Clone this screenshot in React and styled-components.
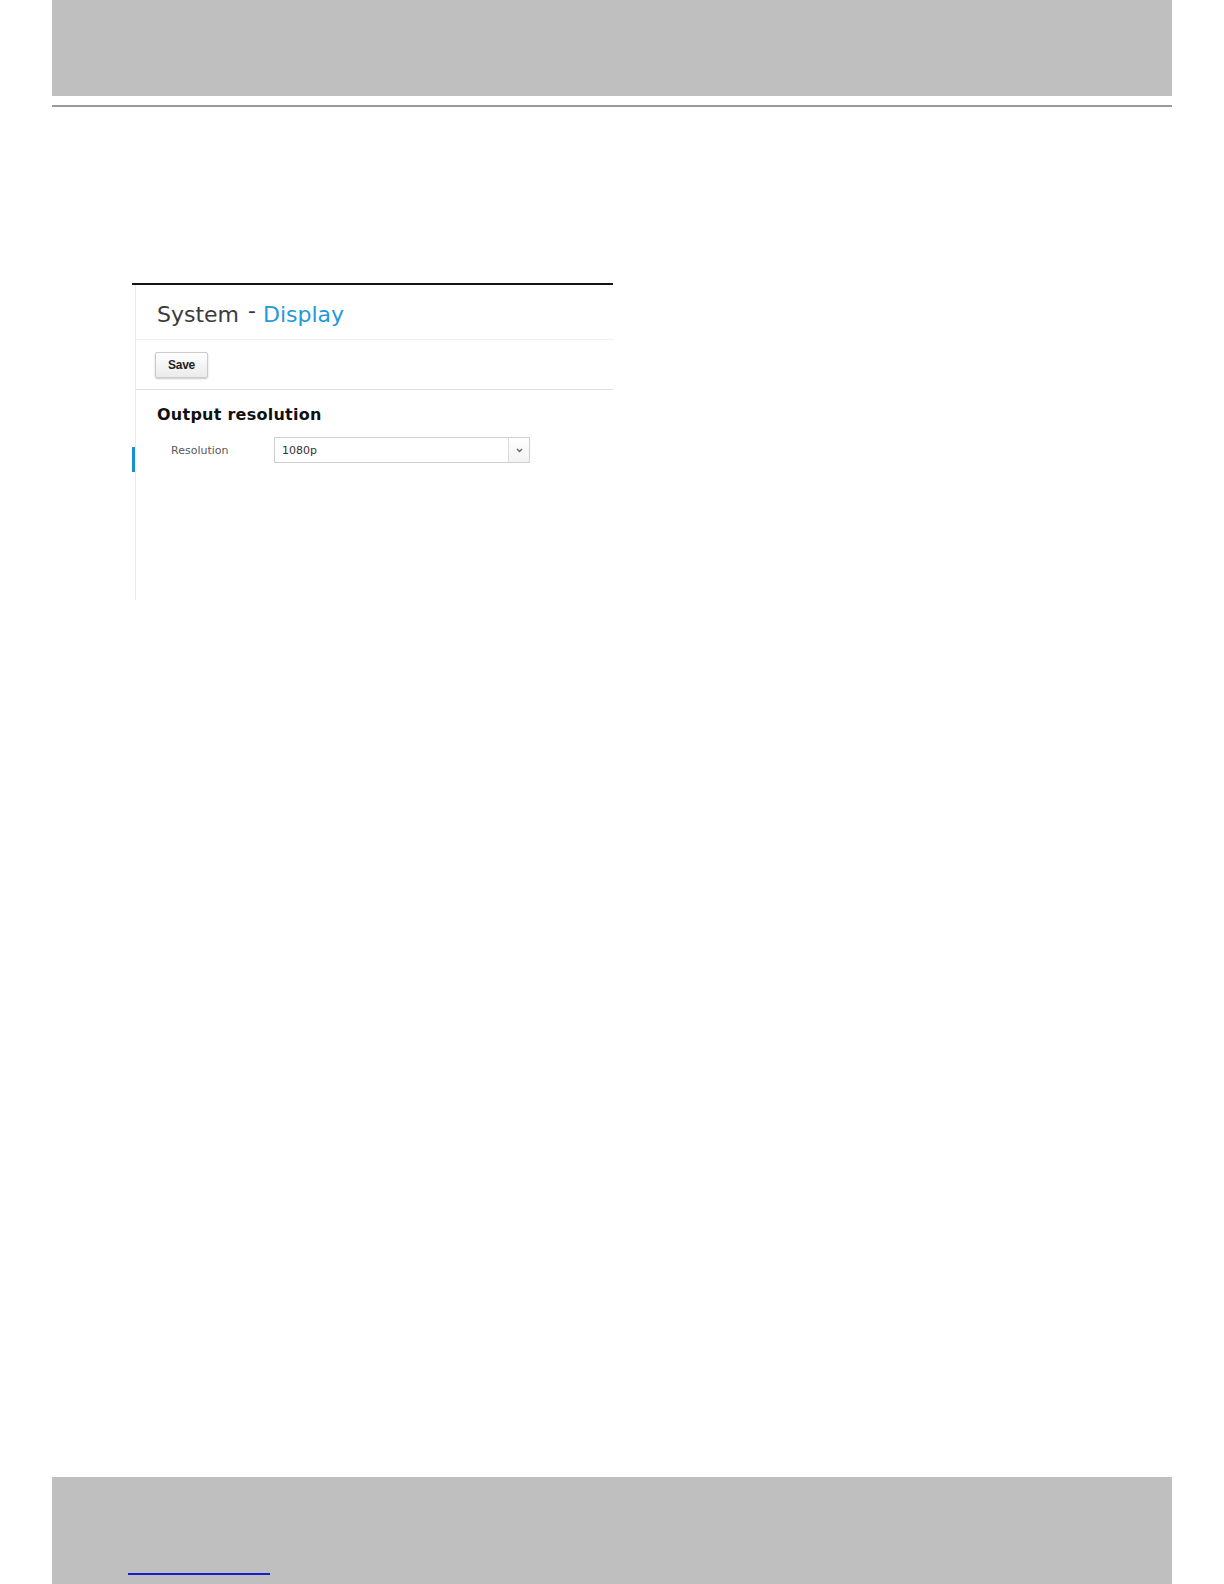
import React from "react";
import styled, { createGlobalStyle } from "styled-components";

const GlobalStyle = createGlobalStyle`
  html, body { margin: 0; padding: 0; background: #ffffff; }
  * { box-sizing: border-box; }
`;

const Page = styled.div`
  min-height: 1584px;
  display: flex;
  flex-direction: column;
`;

const HeaderBand = styled.div`
  margin: 0 52px;
  height: 96px;
  background: #bfbfbf;
`;

const HeaderRule = styled.div`
  margin: 9px 52px 0;
  height: 2px;
  background: #9a9a9a;
`;

const Main = styled.main`
  flex: 1;
  padding: 176px 0 0 132px;
`;

const Shot = styled.section`
  width: 481px;
  border-top: 2px solid #141414;
  display: flex;
`;

const Rail = styled.div`
  width: 3px;
  flex: none;
  padding-top: 162px;
`;

const ActiveMarker = styled.div`
  width: 3px;
  height: 25px;
  background: #1b8fd2;
`;

const Panel = styled.div`
  flex: 1;
  height: 315px;
  border-left: 1px solid #e9e9e9;
  display: flex;
  flex-direction: column;
`;

const TitleBar = styled.div`
  padding: 15px 0 9px 21px;
  border-bottom: 1px solid #f1f1f1;
`;

const Title = styled.h1`
  margin: 0;
  height: 30px;
  font-family: "DejaVu Sans", Verdana, sans-serif;
  font-weight: normal;
  font-size: 22px;
  line-height: 30px;
  color: #3a3a3a;
  white-space: nowrap;
`;

const Dash = styled.span`
  display: inline-block;
  margin: 0 7px 0 9px;
  vertical-align: 4px;
  font-size: 22px;
  line-height: 0;
  color: #333;
`;

const Accent = styled.span`
  color: #1f9ad9;
`;

const Toolbar = styled.div`
  padding: 12px 0 11px 19px;
  border-bottom: 1px solid #dfdfdf;
`;

const Button = styled.button`
  width: 53px;
  height: 26px;
  padding: 0;
  border: 1px solid #cbcbcb;
  border-radius: 2px;
  background: linear-gradient(#ffffff, #ebebeb);
  box-shadow: 0 1px 2px rgba(0, 0, 0, 0.22);
  font-family: "Liberation Sans", Arial, sans-serif;
  font-weight: bold;
  font-size: 12px;
  letter-spacing: -0.3px;
  color: #222;
  display: block;
`;

const Section = styled.div`
  padding: 15px 0 0 21px;
`;

const SectionTitle = styled.h2`
  margin: 0;
  font-family: "DejaVu Sans", Verdana, sans-serif;
  font-weight: bold;
  font-size: 16px;
  letter-spacing: 0.25px;
  line-height: 20px;
  color: #111;
`;

const FieldRow = styled.div`
  margin-top: 12px;
  padding-left: 14px;
  display: flex;
  align-items: center;
`;

const FieldLabel = styled.label`
  width: 103px;
  font-family: "DejaVu Sans", Verdana, sans-serif;
  font-size: 11px;
  color: #5a5a5a;
`;

const SelectBox = styled.div`
  width: 256px;
  height: 26px;
  border: 1px solid #cfcfcf;
  display: flex;
  align-items: stretch;
  background: #fff;
`;

const SelectValue = styled.span`
  flex: 1;
  padding-left: 7px;
  display: flex;
  align-items: center;
  font-family: "DejaVu Sans", Verdana, sans-serif;
  font-size: 11px;
  color: #333;
`;

const SelectArrow = styled.span`
  width: 21px;
  border-left: 1px solid #dcdcdc;
  background: linear-gradient(#ffffff, #f3f3f3);
  display: flex;
  align-items: center;
  justify-content: center;
`;

const FooterBand = styled.footer`
  margin: 0 52px;
  height: 107px;
  background: #bfbfbf;
  padding: 96px 0 0 76px;
`;

const FooterLink = styled.a`
  display: block;
  width: 142px;
  height: 2px;
  background: #1a1ad0;
`;

export default function App() {
  return (
    <>
      <GlobalStyle />
      <Page>
        <HeaderBand />
        <HeaderRule />
        <Main>
          <Shot>
            <Rail>
              <ActiveMarker />
            </Rail>
            <Panel>
              <TitleBar>
                <Title>
                  System<Dash>-</Dash><Accent>Display</Accent>
                </Title>
              </TitleBar>
              <Toolbar>
                <Button type="button">Save</Button>
              </Toolbar>
              <Section>
                <SectionTitle>Output resolution</SectionTitle>
                <FieldRow>
                  <FieldLabel>Resolution</FieldLabel>
                  <SelectBox>
                    <SelectValue>1080p</SelectValue>
                    <SelectArrow>
                      <svg width="7" height="5" viewBox="0 0 7 5">
                        <path d="M1 1 L3.5 3.5 L6 1" fill="none" stroke="#666" strokeWidth="1.4" />
                      </svg>
                    </SelectArrow>
                  </SelectBox>
                </FieldRow>
              </Section>
            </Panel>
          </Shot>
        </Main>
        <FooterBand>
          <FooterLink href="#" aria-label="link" />
        </FooterBand>
      </Page>
    </>
  );
}
